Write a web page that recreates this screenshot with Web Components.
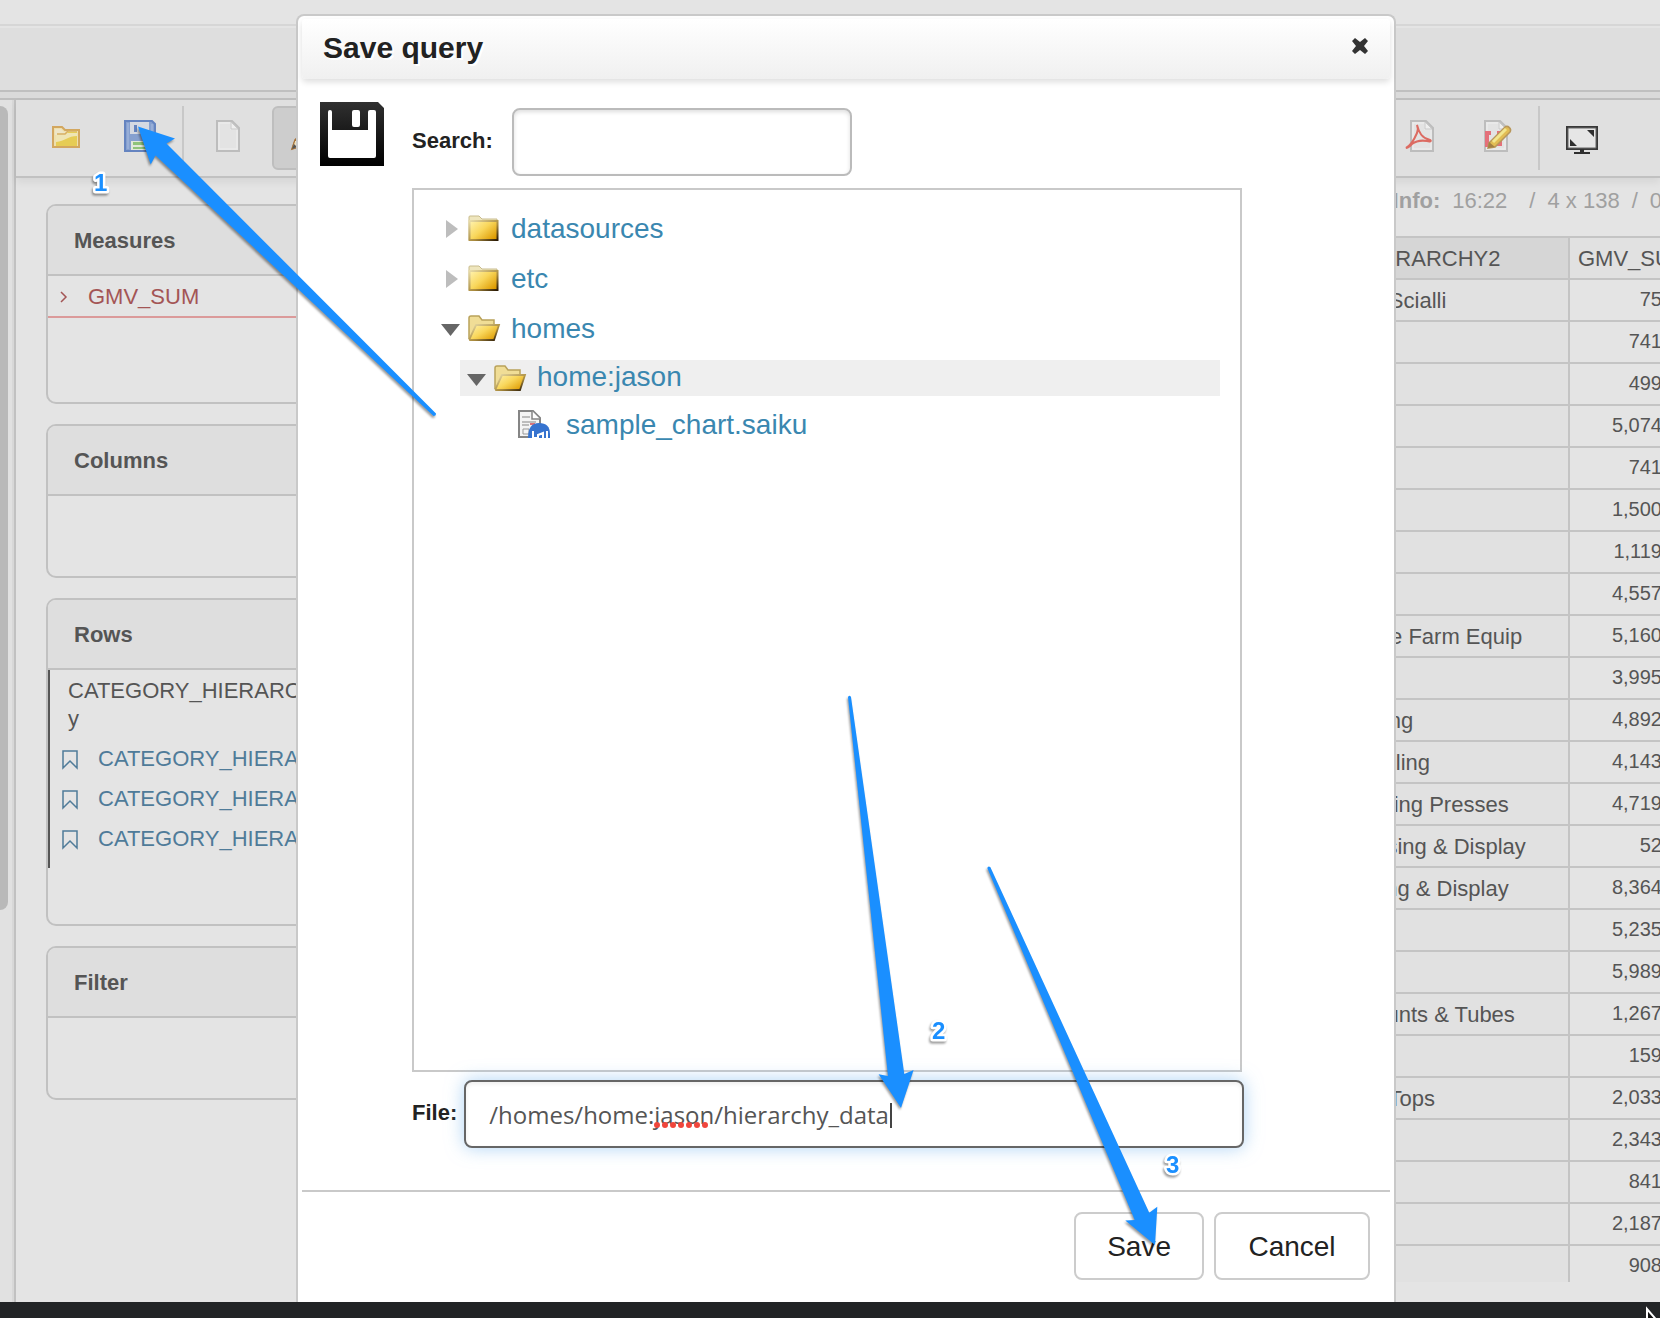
<!DOCTYPE html>
<html lang="en">
<head>
<meta charset="utf-8">
<title>Save query</title>
<style>
html, body { margin: 0; height: 100%; background: #e4e4e4; overflow: hidden; }
body { font: 22px/24px "Liberation Sans", Arial, sans-serif; color: #555; }
</style>
</head>
<body>
<query-app></query-app>
<script>
const define = (name, markup, setup) => {
  const template = document.createElement('template');
  template.innerHTML = markup;
  customElements.define(name, class extends HTMLElement {
    connectedCallback() {
      if (this.shadowRoot) return;
      const root = this.attachShadow({ mode: 'open' });
      root.append(template.content.cloneNode(true));
      if (setup) setup(this, root);
    }
  });
};

const page = '<path d="M5 1h15l7 7v23H5z" fill="#e3e3e3" stroke="#bdbdbd" stroke-width="2"/><path d="M7 3h12v6h6v20H7z" fill="none" stroke="#ebebeb" stroke-width="1.5"/><path d="M19 2v7h7z" fill="#efefef" stroke="#c9c9c9"/>';
const gold = '<defs><linearGradient id="g" x1="0" y1="0" x2="1" y2=".8"><stop offset="0" stop-color="#fff3b0"/><stop offset=".5" stop-color="#f9d75c"/><stop offset="1" stop-color="#dd9a00"/></linearGradient><linearGradient id="e" x1="0" y1="0" x2="1" y2="1"><stop offset="0" stop-color="#e8dca8"/><stop offset=".6" stop-color="#a98a3c"/><stop offset="1" stop-color="#2a1a05"/></linearGradient></defs>';
const icons = {
  open: '<path d="M3 7h9l3 3h14v17H3z" fill="#eee0ae" stroke="#d3a75f" stroke-width="2"/><path d="M5 9h6l3 3h13v3H5z" fill="#eee6c8"/><path d="M6 15h9l3-3h9v14H6z" fill="#e6cc55"/><path d="M6 15h8l3-2h10v3c-9 0-12 5-21 6z" fill="#efe5b4"/><path d="M7 14h8l3-3h9" fill="none" stroke="#d8b060" stroke-width="1.500"/>',
  disk: '<path d="M1 1h27l3 3v27H1z" fill="#86a0cf" stroke="#6584c0" stroke-width="2"/><path d="M6 2h19v12H6z" fill="#d5d9e2"/><path d="M10 5h3v7h-3z" fill="#6584c0"/><path d="M4 3v26M28 4v25" stroke="#a9bce0"/><path d="M7 21h19v9H7z" fill="#e1e8da"/><path d="M9 22h15v3H9zM9 27h15v2H9z" fill="#8fc37a"/>',
  page,
  pencil: '<path d="M4 29l3-9L23 4l6 6L13 26z" fill="#dba45c" stroke="#a6733a" stroke-width="1.5"/><path d="M4 29l3-9 6 6z" fill="#efe0bd" stroke="#a6733a"/><path d="M4 29l2-5 3 3z" fill="#555"/>',
  pdf: page + '<path d="M0 28c4-2 8-8 11-15 1-3 1-6 0-8 2 8 5 13 13 15 2 1 0 2-3 1-6-1-11 0-15 3-2 2-4 4-6 4z" fill="none" stroke="#dc6b62" stroke-width="2"/>',
  edit: page + '<path d="M5 11h6v4H9v8h3v4H5zM17 11h5v4h-5zM17 20h5v6h-5z" fill="#e4707a"/><path d="M9 23L25 7c3-2 7 2 5 5L15 27l-7 1z" fill="#e2bd54" stroke="#b8975a" stroke-width="1.5"/><path d="M13 22L26 9" stroke="#f2e68e" stroke-width="3"/><path d="M9 22l6 5-7 1z" fill="#a38043"/>',
  screen: '<path d="M1 7h30v22H1z" fill="#e6e6e6" stroke="#383838" stroke-width="2"/><path d="M2 8h28v20H2z" fill="none" stroke="#666"/><path d="M21 10h7v7zM4 19v7h7z" fill="#2f2f2f"/><path d="M14 29h4v4h-4zM8 32h16v2H8z" fill="#2f2f2f"/>',
  floppy: '<defs><linearGradient id="f" x1="0" y1="0" x2="0" y2="1"><stop offset="0" stop-color="#303030"/><stop offset="1" stop-color="#000"/></linearGradient></defs><path fill-rule="evenodd" fill="url(#f)" d="M0 0h58l6 6v58H0zM8 10v44q0 2 2 2h44q2 0 2-2V10q0-2-2-2h-4q-2 0-2 2v18H12V10q0-2-2-2t-2 2zM34 8q-2 0-2 2v13q0 2 2 2h4q2 0 2-2V10q0-2-2-2z"/>',
  close: '<path d="M3 1l5 4 5-4 3 3-4 5 4 5-3 3-5-4-5 4-3-3 4-5-4-5z" fill="#333"/>',
  chevron: '<path d="M1 1l5 5-5 5" fill="none" stroke="#a35555" stroke-width="1.5"/>',
  bookmark: '<path d="M1 1h14v17l-7-7-7 7z" fill="none" stroke="#4f7b99" stroke-width="1.5"/>',
  right: '<path d="M6 2l12 9-12 9z" fill="#bdbdbd"/>',
  down: '<path d="M1 6h19l-9.500 12z" fill="#666"/>',
  folder: gold + '<path d="M1 25V2q0-1 1-1h9l3 3h15v21z" fill="#efe6bd" stroke="#c8bb8c"/><path d="M1.500 6h28v19h-28z" fill="url(#g)" stroke="url(#e)" stroke-width="2"/>',
  folderopen: gold + '<path d="M1 24V3q0-2 2-2h8l3 4h12v6" fill="#f0dd96" stroke="#b9a25b" stroke-width="1.500"/><path d="M1.500 24L8 10h23l-5 15H2z" fill="url(#g)" stroke="url(#e)" stroke-width="1.800"/>',
  report: '<path d="M1 1h14l7 7v19H1z" fill="#f4f4f4" stroke="#858585" stroke-width="2"/><path d="M14 1v8h8" fill="#fff" stroke="#858585" stroke-width="1.500"/><path d="M4 7h8M4 12h14M4 15h7" stroke="#aaa" stroke-width="1.500"/><path d="M5 19h6v5H5z" fill="none" stroke="#999"/><path d="M12 14h5" stroke="#d9737c" stroke-width="2"/><path d="M10 28q0-15 11-15t11 11v4z" fill="#3673cf"/><path d="M15 21v7h5v-3l5-2v5M29 21v7" stroke="#fff" stroke-width="2" fill="none"/>'
};
const sizes = { floppy: [64, 64], close: [16, 18], chevron: [16, 12], bookmark: [16, 19], right: [20, 20], down: [20, 20], folder: [32, 26], folderopen: [32, 26], report: [32, 28] };

define('ui-icon', '<style>:host{display:block;flex:none}svg{display:block;overflow:visible}</style>', (host, root) => {
  const name = host.getAttribute('name');
  const [w, h] = sizes[name] || [32, 32];
  const box = document.createElement('template');
  box.innerHTML = `<svg width="${w}" height="${h}" viewBox="0 0 ${w} ${h}" aria-hidden="true">${icons[name]}</svg>`;
  root.append(box.content);
});

define('tool-button', `
<style>
:host{display:block}
button{display:flex;align-items:center;justify-content:center;width:64px;height:64px;padding:0 0 4px;box-sizing:border-box;border:2px solid transparent;border-radius:6px;background:none}
:host([active]) button{background:#cdcdcd;border-color:#bebebe}
</style>
<button type="button"></button>`, (host, root) => {
  const button = root.querySelector('button');
  button.setAttribute('aria-label', host.getAttribute('label'));
  const icon = document.createElement('ui-icon');
  icon.setAttribute('name', host.getAttribute('icon'));
  button.append(icon);
});

define('tool-bar', `
<style>
:host{display:flex;align-items:center;gap:10px;height:76px;padding:0 46px 0 18px;border-bottom:2px solid #c1c1c1;background:#e0e0e0;box-shadow:0 4px 8px #0001;position:relative}
i{width:2px;height:64px;background:#c8c8c8}
.group{display:flex;align-items:center;gap:10px}
.first{gap:12px}
.push{margin-left:auto}
</style>
<div class="group">
<tool-button icon="open" label="Open query"></tool-button>
<tool-button icon="disk" label="Save query"></tool-button>
</div>
<div class="group first">
<i></i>
<tool-button icon="page" label="New query"></tool-button>
<tool-button icon="pencil" label="Edit query" active></tool-button>
</div>
<div class="group push">
<tool-button icon="pdf" label="Export PDF"></tool-button>
<tool-button icon="edit" label="Edit report"></tool-button>
<i></i>
<tool-button icon="screen" label="Full screen"></tool-button>
</div>`);

define('drop-zone', `
<style>
:host{display:block;border:2px solid #c1c1c1;border-radius:10px;overflow:hidden}
h2{margin:0;padding:2px 0 0 26px;font-size:22px;line-height:66px;background:#dedede;border-bottom:2px solid #c1c1c1}
.body{min-height:80px}
:host([size=medium]) .body{min-height:126px}
:host([size=large]) .body{min-height:254px}
</style>
<h2></h2><div class="body"><slot></slot></div>`, (host, root) => {
  root.querySelector('h2').textContent = host.getAttribute('label');
});

define('zone-list', `
<style>
:host{display:flex;flex-direction:column;gap:20px;flex:none;box-sizing:border-box;width:424px;padding:26px 30px 0}
.measure{display:flex;align-items:center;gap:12px;height:38px;padding:2px 0 0 12px;border-bottom:2px solid #db9a9a;color:#a35555}
.axis{border-left:2px solid #555;padding:7px 0 9px 0}
p{margin:0 0 6px 18px;line-height:28px}
ul{margin:0;padding:0;list-style:none;color:#4f7b99}
li{display:flex;align-items:center;gap:20px;padding-left:12px;line-height:40px}
</style>
<drop-zone label="Measures" size="medium"><div class="measure"><ui-icon name="chevron"></ui-icon>GMV_SUM</div></drop-zone>
<drop-zone label="Columns"></drop-zone>
<drop-zone label="Rows" size="large">
<div class="axis"><p>CATEGORY_HIERARCHY<br>y</p>
<ul><li><ui-icon name="bookmark"></ui-icon>CATEGORY_HIERARCHY</li><li><ui-icon name="bookmark"></ui-icon>CATEGORY_HIERARCHY</li><li><ui-icon name="bookmark"></ui-icon>CATEGORY_HIERARCHY</li></ul></div>
</drop-zone>
<drop-zone label="Filter"></drop-zone>`);

const rows = [
  ['Hat Accessories Scialli', '75'], ['', '741'], ['', '499'], ['', '5,074'], ['', '741'], ['', '1,500'], ['', '1,119'], ['', '4,557'],
  ['Simple Agriculture Farm Equip', '5,160'], ['', '3,995'], ['Bulk Manufacturing', '4,892'], ['Metalworking Tooling', '4,143'],
  ['Commercial Printing Presses', '4,719'], ['Store Merchandising & Display', '52'], ['Product Packaging & Display', '8,364'],
  ['', '5,235'], ['', '5,989'], ['Large Scope Mounts & Tubes', '1,267'], ['', '159'], ['Kitchen Counter Tops', '2,033'],
  ['', '2,343'], ['', '841'], ['', '2,187'], ['', '908']
];

define('result-table', `
<style>
:host{display:block;flex:1;min-width:0;overflow:hidden}
.pane{width:1234px}
.info{display:flex;justify-content:flex-end;gap:12px;padding:11px 12px 0 0;height:47px;color:#a0a0a0}
.time{margin-right:10px}
.clip{max-height:1046px;overflow:hidden}
table{table-layout:fixed;width:1234px;border-spacing:0;border-top:2px solid #c4c4c4}
th,td{box-sizing:border-box;height:42px;padding:2px 8px 0;border:solid #c4c4c4;border-width:0 2px 2px 0;text-align:left;font-weight:400;white-space:nowrap;line-height:24px}
tbody th{background:#e1e1e1}
thead th{background:#d6d6d6}
thead .m{background:#e1e1e1}
td{font-size:20px;text-align:right;padding:0 10px 2px}
.c1{width:777px}.c2{width:353px}
</style>
<div class="pane">
<div class="info"><b>Info:</b><span class="time">16:22</span><span>/</span><span>4 x 138</span><span>/</span><span>0</span></div>
<div class="clip"><table><colgroup><col class="c1"><col class="c2"><col></colgroup>
<thead><tr><th></th><th>CATEGORY_HIERARCHY2</th><th class="m">GMV_SUM</th></tr></thead><tbody></tbody></table></div>
</div>`, (host, root) => {
  const body = root.querySelector('tbody');
  for (const [name, value] of rows) {
    const tr = body.insertRow();
    for (const text of ['', name]) {
      const th = document.createElement('th');
      th.textContent = text;
      tr.append(th);
    }
    tr.insertCell().textContent = value;
  }
});

define('tree-item', `
<style>
:host{display:block}
.row{display:flex;align-items:center;height:50px;font-size:28px;line-height:32px}
ui-icon{margin-right:11px}
.arrow{margin-right:8px}
a{color:#3a87b0;text-decoration:none;padding-top:2px}
:host([level="2"]) .row{height:36px;margin-top:7px;padding:0 0 0 6px;background:#efefef}
:host([level="3"]) .row{height:36px;margin-top:10px;padding-left:38px}
:host([level="3"]) .kind{margin-right:16px}
:host([level="2"]) a{padding:0 0 2px}
.sub{margin-left:20px}
</style>
<div class="row"></div><div class="sub"><slot></slot></div>`, (host, root) => {
  const row = root.querySelector('.row');
  const add = (name, cls) => {
    const icon = document.createElement('ui-icon');
    icon.setAttribute('name', name);
    icon.className = cls;
    row.append(icon);
  };
  if (host.hasAttribute('arrow')) add(host.getAttribute('arrow'), 'arrow');
  add(host.getAttribute('icon'), 'kind');
  const link = document.createElement('a');
  link.href = '#';
  link.textContent = host.getAttribute('label');
  row.append(link);
});

define('save-dialog', `
<style>
:host{display:flex;flex-direction:column;box-sizing:border-box;padding:3px 4px 0;border:2px solid #c9c9c9;border-bottom:0;border-radius:8px 8px 0 0;background:#fff;color:#222}
header{display:flex;align-items:center;justify-content:space-between;box-sizing:border-box;height:60px;padding:0 22px 4px 21px;background:linear-gradient(#fff,#f0f0f0);border-radius:4px;box-shadow:0 3px 6px #0002}
h1{margin:0;padding-top:2px;font-size:30px;line-height:36px;text-shadow:2px 2px 0 #fff}
header button{padding:0 0 2px;border:0;background:none}
form{flex:1;display:flex;flex-direction:column;min-height:0;margin:0}
.body{flex:1;display:flex;gap:28px;padding:23px 146px 42px 18px}
.main{flex:1;display:flex;flex-direction:column;padding-top:6px}
.search{display:flex;align-items:center;gap:19px;margin-bottom:12px}
.file{display:flex;align-items:center;gap:7px;margin-top:8px}
label{font-weight:700;padding-bottom:2px}
input{box-sizing:border-box;height:68px;border:2px solid #bbb;border-radius:8px;padding:0 23px;background:#fff;color:#555;font:24px "Open Sans","Noto Sans",sans-serif;outline:0}
.search input{width:340px;box-shadow:inset 0 2px 4px #0002}
.field{position:relative;flex:1;display:flex}
.field input{width:100%;border-color:#666;box-shadow:0 0 18px #7ab8ee99,inset 0 2px 4px #0001}
.field svg{position:absolute;left:190px;top:22px}
.tree{flex:1;margin-right:2px;padding:13px 20px 0 26px;border:2px solid #c9c9c9}
footer{display:flex;justify-content:flex-end;gap:10px;padding:20px 20px 22px;border-top:2px solid #c9c9c9}
footer button{height:68px;padding:2px 31px 0;border:2px solid #ccc;border-radius:8px;background:#fff;color:#222;font:28px/32px "Liberation Sans",Arial,sans-serif}
footer button:last-child{min-width:156px}
</style>
<header><h1>Save query</h1><button type="button" aria-label="Close"><ui-icon name="close"></ui-icon></button></header>
<form>
<div class="body">
<ui-icon name="floppy"></ui-icon>
<div class="main">
<div class="search"><label for="q">Search:</label><input id="q" type="text"></div>
<div class="tree">
<tree-item arrow="right" icon="folder" label="datasources"></tree-item>
<tree-item arrow="right" icon="folder" label="etc"></tree-item>
<tree-item arrow="down" icon="folderopen" label="homes">
<tree-item level="2" arrow="down" icon="folderopen" label="home:jason">
<tree-item level="3" icon="report" label="sample_chart.saiku"></tree-item>
</tree-item>
</tree-item>
</div>
<div class="file"><label for="f">File:</label><div class="field"><input id="f" type="text" spellcheck="false" value="/homes/home:jason/hierarchy_data">
<svg width="240" height="28" aria-hidden="true"><path d="M3 23h52" stroke="#f0463c" stroke-width="6" stroke-linecap="round" stroke-dasharray="0 8"/><path d="M237 1v25" stroke="#444" stroke-width="2"/></svg></div></div>
</div>
</div>
<footer><button type="button">Save</button><button type="button">Cancel</button></footer>
</form>`);

define('note-layer', `
<style>
:host{display:block;pointer-events:none}
svg{display:block;filter:drop-shadow(-1px 2px 1px #0006)}
text{font:700 24px "Liberation Sans",Arial,sans-serif;stroke:#fff;stroke-width:5px;stroke-linejoin:round;paint-order:stroke}
</style>
<svg width="1660" height="1318" fill="#1a8fff">
<path d="M138 126.500L175 138.500 166.500 143.500 436 413.500Q436 416 433.500 416L155.500 155.500 150.700 164.500z"/>
<path d="M901 1108L878.600 1074.300 888 1076 848 697Q849.500 694.500 851 697L904.300 1074 913.600 1070z"/>
<path d="M1155 1245L1125.300 1220.500 1134.700 1220 987.300 868Q988 865.500 990.300 867L1149.300 1212.700 1157.300 1206.700z"/>
<text x="94" y="191">1</text><text x="932" y="1039">2</text><text x="1166" y="1173">3</text>
</svg>`);

define('query-app', `
<style>
:host{display:flex;flex-direction:column;position:relative;height:100vh;overflow:hidden}
.top{height:24px;border-bottom:2px solid #d6d6d6}
.tabs{height:62px;border-top:2px solid #e4e4e4;border-bottom:2px solid #bfbfbf;background:#dedede}
.rule{height:6px;background:#dadada;border-bottom:2px solid #bfbfbf}
.main{flex:1;display:flex;min-height:0}
.gutter{width:12px;padding-top:6px;border-right:2px solid #d8d8d8;background:#e1e1e1}
.thumb{width:8px;height:804px;border-radius:0 8px 8px 0;background:#b9b9b9}
.work{flex:1;min-width:0;border-left:2px solid #c1c1c1}
.cols{display:flex}
.dock{display:flex;justify-content:flex-end;height:16px;background:#222426}
save-dialog{position:absolute;left:296px;right:264px;top:14px;bottom:16px}
note-layer{position:absolute;left:0;top:0}
</style>
<div class="top"></div><div class="tabs"></div><div class="rule"></div>
<div class="main">
<div class="gutter"><div class="thumb"></div></div>
<div class="work"><tool-bar></tool-bar><div class="cols"><zone-list></zone-list><result-table></result-table></div></div>
</div>
<div class="dock"><svg width="16" height="16"><path d="M3 7v16l13-1z" fill="#111" stroke="#fff" stroke-width="2"/></svg></div>
<save-dialog></save-dialog>
<note-layer></note-layer>`);
</script>
</body>
</html>
